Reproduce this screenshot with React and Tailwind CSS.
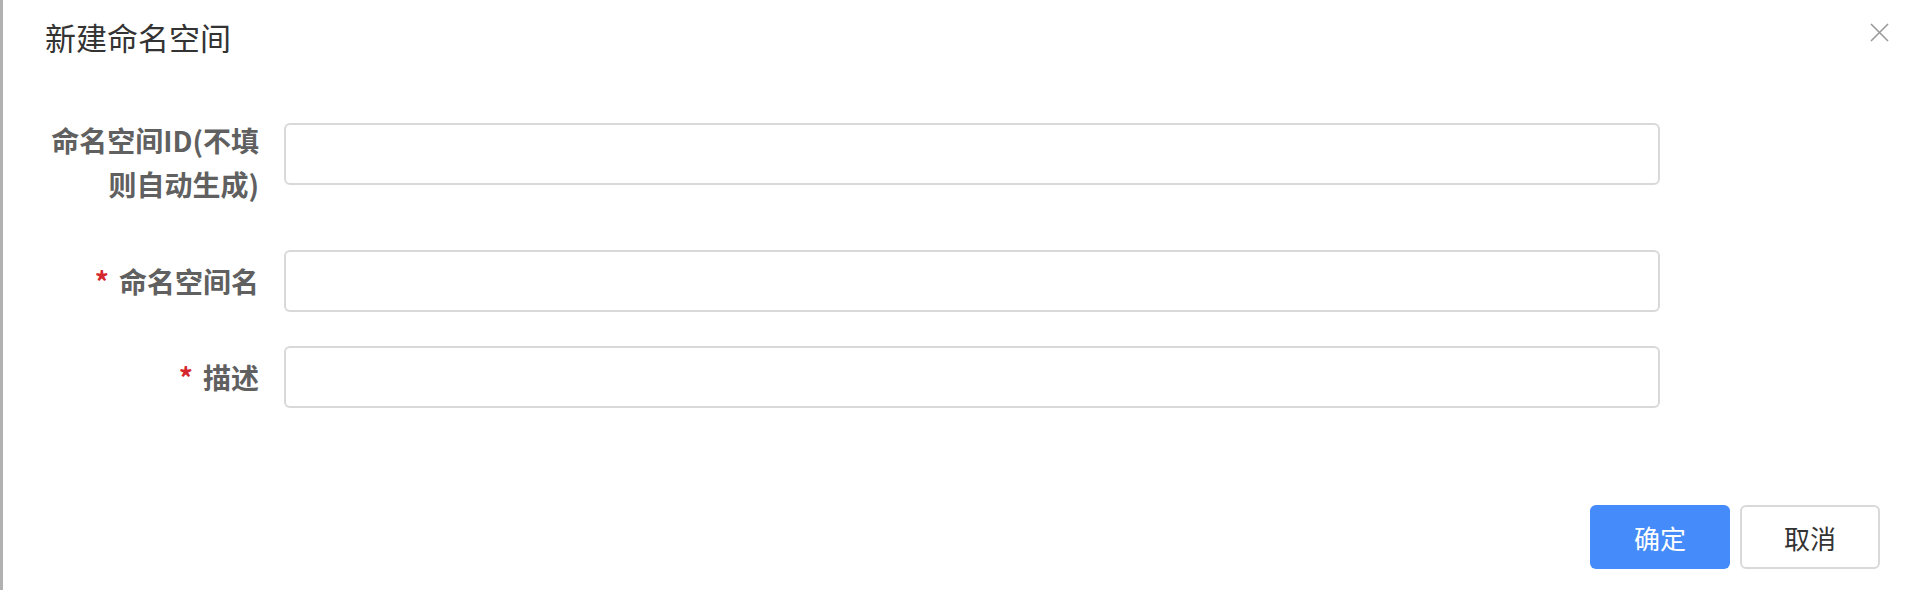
import React from 'react';

const fontStack = { fontFamily: '"Noto Sans CJK SC", "Noto Sans", sans-serif' };

const Label = ({ required, children, className = '' }) => (
  <div className={`w-[256px] shrink-0 text-right text-[28px] font-bold leading-[44px] text-[#606060] ${className}`}>
    {required && <span className="mr-[10px] text-[#d6262d]">*</span>}
    {children}
  </div>
);

const Input = ({ className = '' }) => (
  <input
    type="text"
    className={`ml-[25px] h-[62px] w-[1376px] rounded-[6px] border-2 border-[#d9d9d9] bg-white px-4 text-[26px] outline-none ${className}`}
  />
);

const App = () => {
  return (
    <div className="flex h-[590px] w-full flex-col border-l-[3px] border-[#b1b1b1] bg-white" style={fontStack}>
      {/* Header */}
      <div className="flex items-start justify-between pl-[42px] pr-[19px] pt-[17px]">
        <h2 className="text-[31px] font-normal leading-[40px] text-[#333]">新建命名空间</h2>
        <button className="mt-[6px] text-[#999]" aria-label="close">
          <svg width="19" height="19" viewBox="0 0 19 19" fill="none" stroke="currentColor" strokeWidth="1.6">
            <path d="M1 1L18 18M18 1L1 18" />
          </svg>
        </button>
      </div>

      {/* Form */}
      <div className="mt-[61px] flex flex-col">
        <div className="flex items-start">
          <Label>
            命名空间ID(不填
            <br />
            则自动生成)
          </Label>
          <Input className="mt-[5px]" />
        </div>

        <div className="mt-[44px] flex items-center">
          <Label required>命名空间名</Label>
          <Input />
        </div>

        <div className="mt-[34px] flex items-center">
          <Label required>描述</Label>
          <Input />
        </div>
      </div>

      {/* Footer */}
      <div className="mt-[97px] flex justify-end gap-[10px] pr-[28px]">
        <button className="h-[64px] w-[140px] rounded-[6px] bg-[#458cfa] text-[26px] text-white">确定</button>
        <button className="h-[64px] w-[140px] rounded-[6px] border-2 border-[#d9d9d9] bg-white text-[26px] text-[#333]">
          取消
        </button>
      </div>
    </div>
  );
};

export default App;
